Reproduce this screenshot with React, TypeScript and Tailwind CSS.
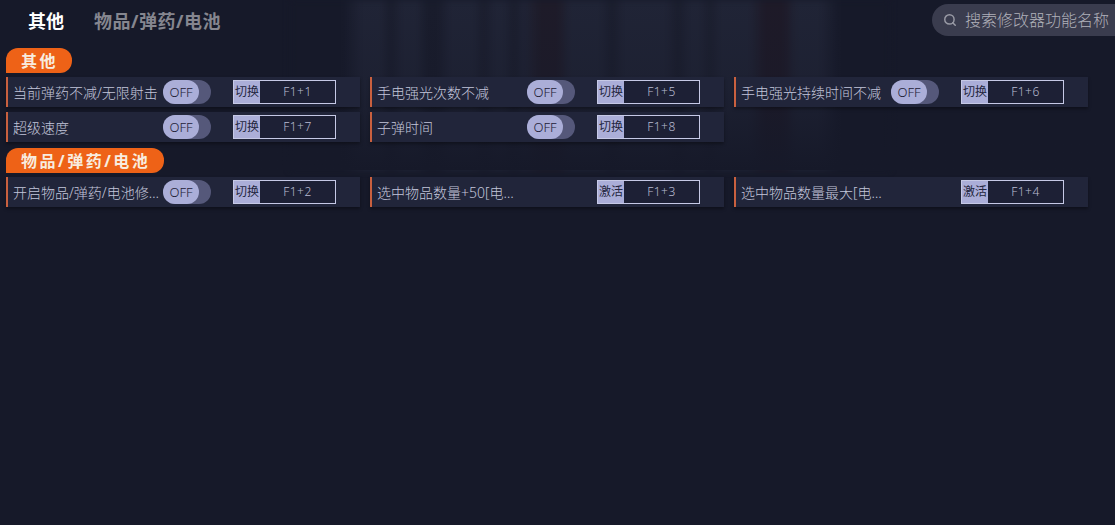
import { Search } from 'lucide-react';

interface Item {
  label: string;
  mode: string;
  hotkey: string;
  toggle?: boolean;
}

const otherItems: Item[] = [
  { label: '当前弹药不减/无限射击', mode: '切换', hotkey: 'F1+1', toggle: true },
  { label: '手电强光次数不减', mode: '切换', hotkey: 'F1+5', toggle: true },
  { label: '手电强光持续时间不减', mode: '切换', hotkey: 'F1+6', toggle: true },
  { label: '超级速度', mode: '切换', hotkey: 'F1+7', toggle: true },
  { label: '子弹时间', mode: '切换', hotkey: 'F1+8', toggle: true },
];

const supplyItems: Item[] = [
  { label: '开启物品/弹药/电池修改', mode: '切换', hotkey: 'F1+2', toggle: true },
  { label: '选中物品数量+50[电池/弹药]', mode: '激活', hotkey: 'F1+3' },
  { label: '选中物品数量最大[电池/弹药]', mode: '激活', hotkey: 'F1+4' },
];

const Row = ({ item }: { item: Item }) => (
  <div className="flex h-[30px] w-[354px] items-center border-l-2 border-[#c9603f] bg-[#21253a] shadow-[0_2px_3px_rgba(0,0,0,0.35)]">
    <span className="ml-[5px] mt-[2px] w-[148px] truncate text-[14px] leading-5 font-light text-[#c3c6da]">{item.label}</span>
    <div className="ml-[2px] w-[48px]">
      {item.toggle && (
        <div className="flex h-6 w-12 rounded-full bg-[#55587a]">
          <span className="flex h-6 w-9 items-center justify-center rounded-full bg-[#abaed8] text-[13px] leading-4 font-light text-[#1d2036]">
            OFF
          </span>
        </div>
      )}
    </div>
    <div className="ml-[22px] flex h-6 w-[103px] border border-[#c6c9e6]">
      <span className="flex w-[26px] items-center justify-center bg-[#abaed8] text-[12px] leading-4 text-[#23263e]">{item.mode}</span>
      <span className="flex flex-1 items-center justify-center bg-[#1d2035] text-[12px] leading-4 font-light tracking-[0.5px] text-[#b9bcd2]">
        {item.hotkey}
      </span>
    </div>
  </div>
);

const Section = ({ title, items }: { title: string; items: Item[] }) => (
  <section className="flex flex-col items-start">
    <h2 className="flex h-[25px] items-center rounded-tl-[12px] rounded-tr-[12px] rounded-br-[12px] bg-[#ee6217] pl-[15px] pr-[14px] text-[16px] leading-5 font-bold tracking-[2.5px] text-[#f8ecdf]">
      {title}
    </h2>
    <div className="mt-1 grid grid-cols-[354px_354px_354px] gap-x-[10px] gap-y-[5px]">
      {items.map((item) => (
        <Row key={item.hotkey} item={item} />
      ))}
    </div>
  </section>
);

export default function App() {
  return (
    <div
      className="relative h-[525px] w-[1115px] overflow-hidden bg-[#161929] text-[#c3c6da]"
      style={{ fontFamily: '"Noto Sans", "Noto Sans CJK SC", sans-serif' }}
    >
      {/* blurred game art behind the header */}
      <div className="absolute left-[290px] top-0 h-[170px] w-[600px] bg-[linear-gradient(to_right,#161929_0px,#161929_52px,#202436_72px,#202436_92px,#191c2c_100px,#202436_112px,#202436_128px,#191c2c_136px,#191c2c_148px,#202436_160px,#202436_184px,#1a1d2d_194px,#202436_204px,#202436_214px,#1a1d2d_224px,#202436_234px,#1e1b29_250px,#1e1b29_268px,#202436_280px,#202436_310px,#1a1d2d_322px,#202436_334px,#202436_376px,#1a1d2d_388px,#202436_400px,#202436_410px,#1b1e2e_420px,#202436_430px,#202436_460px,#1e1a28_474px,#1e1a28_494px,#202436_506px,#202436_530px,#161929_550px)] blur-[3px]" />
      <div className="absolute left-0 top-0 h-[170px] w-full bg-gradient-to-b from-transparent via-[#161929]/30 to-[#161929]" />

      <div className="relative flex flex-col">
        <header className="flex h-[48px] items-start">
          <nav className="flex items-center pl-[28px] pt-[7px] text-[18px] leading-7 font-bold">
            <span className="text-white">其他</span>
            <span className="ml-[30px] tracking-[0.5px] text-[#85868f]">物品/弹药/电池</span>
          </nav>
          <div className="ml-auto mt-1 flex h-8 w-[183px] items-center rounded-l-full bg-[#3a3c4e] pl-[11px]">
            <Search size={14} strokeWidth={2.5} className="shrink-0 text-[#9a9ba6]" />
            <span className="ml-[8px] whitespace-nowrap text-[16px] leading-6 font-light text-[#b0b1ba]">搜索修改器功能名称</span>
          </div>
        </header>

        <div className="flex flex-col gap-[6px] pl-[6px]">
          <Section title="其他" items={otherItems} />
          <Section title="物品/弹药/电池" items={supplyItems} />
        </div>
      </div>
    </div>
  );
}
